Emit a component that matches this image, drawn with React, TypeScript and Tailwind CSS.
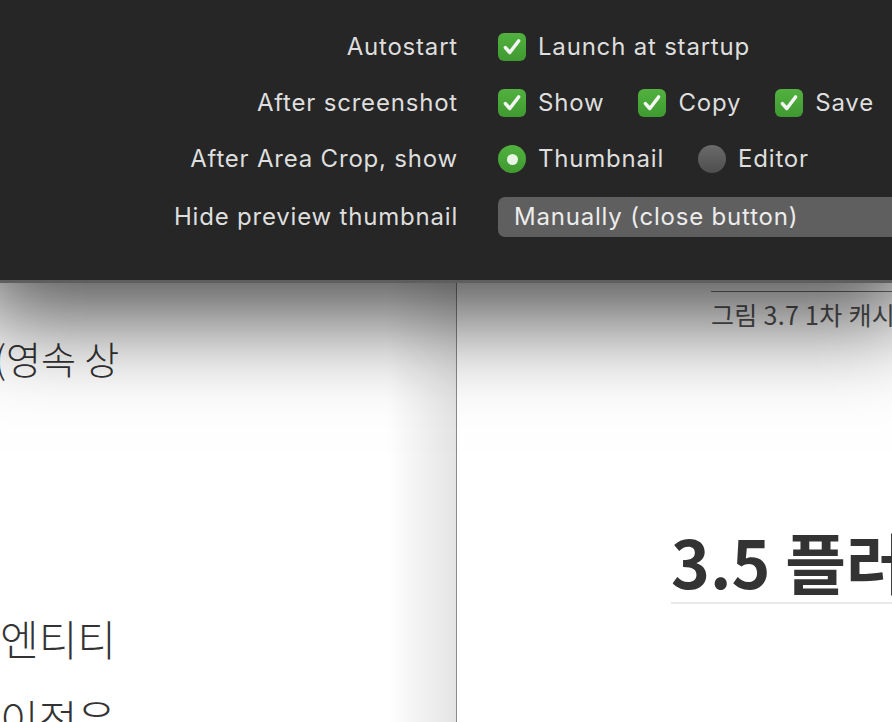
import React from 'react';

function Check({ label }: { label: string }) {
    return (
        <div className="flex items-center gap-3">
            <span className="flex h-7 w-7 items-center justify-center rounded-[6px] bg-gradient-to-b from-[#52b13f] to-[#3f9a30]">
                <svg width="22" height="22" viewBox="0 0 20 20" fill="none">
                    <path d="M4 10.5l4 4.5 8-10.5" stroke="#f4f4f4" strokeWidth="3.2" strokeLinecap="round" strokeLinejoin="round" />
                </svg>
            </span>
            <span>{label}</span>
        </div>
    );
}

function Radio({ label, on }: { label: string; on?: boolean }) {
    return (
        <div className="flex items-center gap-3">
            {on ? (
                <span className="flex h-7 w-7 items-center justify-center rounded-full bg-gradient-to-b from-[#52b13f] to-[#3f9a30]">
                    <span className="h-[11px] w-[11px] rounded-full bg-[#e8f4e4]" />
                </span>
            ) : (
                <span className="h-7 w-7 rounded-full bg-gradient-to-b from-[#6a6a6a] to-[#4e4e4e]" />
            )}
            <span>{label}</span>
        </div>
    );
}

export default function App() {
    return (
        <div className="relative flex h-[722px] w-[892px] flex-col overflow-hidden bg-white">
            {/* settings panel */}
            <div className="relative z-10 h-[283px] shrink-0 border-b-[3px] border-[#5e5e5e] bg-[#262626] pt-[19px] text-[24px] tracking-[0.8px] text-[#dedede] shadow-[0_10px_90px_25px_rgba(0,0,0,0.7)] font-['Inter',sans-serif]">
                <div className="grid grid-cols-[458px_1fr] gap-x-10">
                    <div className="flex h-14 items-center justify-end">Autostart</div>
                    <div className="flex h-14 items-center">
                        <Check label="Launch at startup" />
                    </div>

                    <div className="flex h-14 items-center justify-end">After screenshot</div>
                    <div className="flex h-14 items-center gap-[34px]">
                        <Check label="Show" />
                        <Check label="Copy" />
                        <Check label="Save" />
                    </div>

                    <div className="flex h-14 items-center justify-end">After Area Crop, show</div>
                    <div className="flex h-14 items-center gap-[34px]">
                        <Radio label="Thumbnail" on />
                        <Radio label="Editor" />
                    </div>

                    <div className="mt-[2px] flex h-14 items-center justify-end">Hide preview thumbnail</div>
                    <div className="mt-[2px] flex h-14 items-center">
                        <div className="flex h-10 w-[420px] items-center rounded-[7px] bg-[#5f5f5f] px-4 text-[#ececec]">
                            Manually (close button)
                        </div>
                    </div>
                </div>
            </div>

            {/* document behind */}
            <div className="flex flex-1 font-['Noto_Sans_CJK_KR',sans-serif] text-[#333]">
                <div className="w-[457px] shrink-0 overflow-hidden border-r border-[#8a8a8a] bg-gradient-to-r from-white from-[85%] to-[#e4e4e4]">
                    <p className="-ml-[6px] mt-[56px] whitespace-nowrap text-[38px] font-light leading-none">(영속 상</p>
                    <p className="mt-[240px] text-[42px] font-light leading-none">엔티티</p>
                    <p className="mt-[38px] text-[42px] font-light leading-none">이점은</p>
                </div>
                <div className="flex-1 overflow-hidden pl-[254px]">
                    <div className="mt-[8px] border-t border-[#777]" />
                    <p className="mt-[10px] whitespace-nowrap text-[25px] leading-none tracking-[0.3px] text-[#555]">그림 3.7 1차 캐시</p>
                    <h2 className="-ml-[40px] mt-[200px] whitespace-nowrap border-b-2 border-[#e8e8e8] pb-[9px] text-[66px] font-bold leading-none">
                        3.5 플러시
                    </h2>
                </div>
            </div>
        </div>
    );
}
